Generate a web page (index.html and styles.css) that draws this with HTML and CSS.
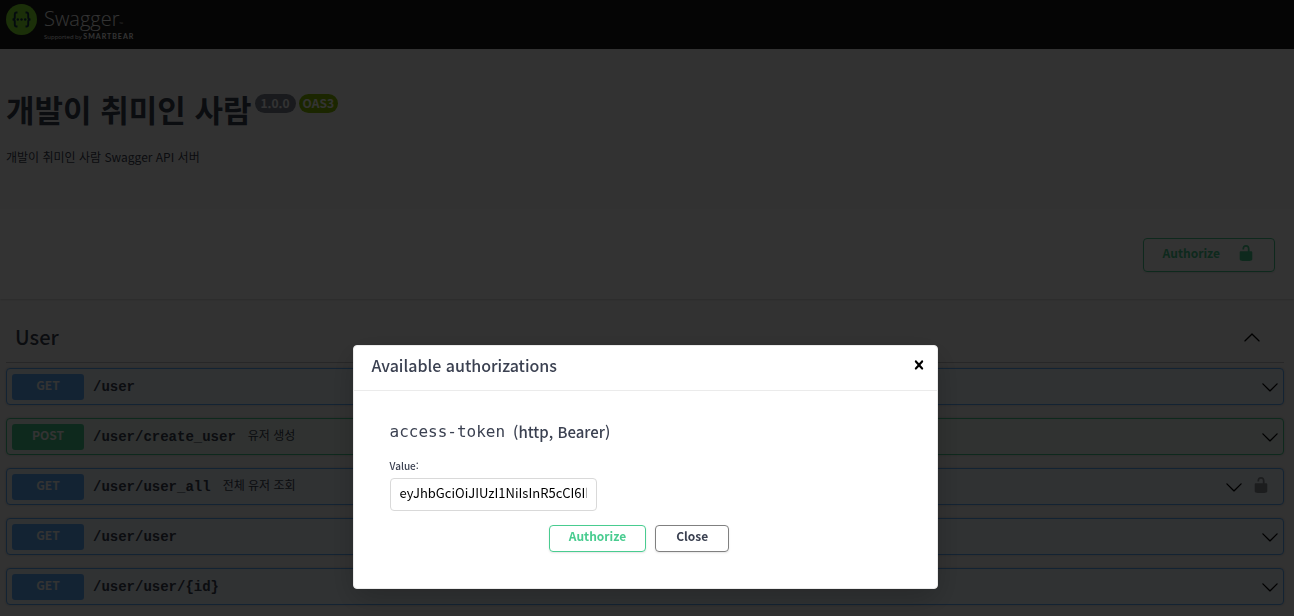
FILE: index.html
```html
<!DOCTYPE html>
<html lang="ko">
<head>
<meta charset="utf-8">
<meta name="viewport" content="width=device-width, initial-scale=1">
<title>Swagger UI</title>
<link rel="stylesheet" href="styles.css">
</head>
<body>
<svg class="sprite" aria-hidden="true">
  <symbol id="arrow-down" viewBox="0 0 20 20"><path d="M17.418 6.109c.272-.268.709-.268.979 0s.271.701 0 .969l-7.908 7.83c-.27.268-.707.268-.979 0l-7.908-7.83c-.27-.268-.27-.701 0-.969.271-.268.709-.268.979 0L10 13.25l7.418-7.141z"/></symbol>
  <symbol id="arrow-up" viewBox="0 0 20 20"><path d="M17.418 14.908c.272.281.709.281.979 0s.271-.712 0-.969L10.489 6.109c-.27-.268-.707-.268-.979 0l-7.908 7.83c-.27.268-.27.701 0 .969.271.268.709.268.979 0L10 7.767l7.418 7.141z"/></symbol>
  <symbol id="unlocked" viewBox="0 0 20 20"><path d="M15.8 8H14V5.6C14 2.703 12.665 1 10 1 7.334 1 6 2.703 6 5.6V6h2v-.801C8 3.754 8.797 3 10 3c1.203 0 2 .754 2 2.199V8H4c-.553 0-1 .646-1 1.199V17c0 .549.428 1.139.951 1.307l1.197.387C5.672 18.861 6.55 19 7.1 19h5.8c.549 0 1.428-.139 1.951-.307l1.196-.387c.524-.167.953-.757.953-1.306V9.199C17 8.646 16.352 8 15.8 8z"/></symbol>
</svg>

<header class="topbar">
  <a class="brand" href="#">
    <svg class="brand-mark" viewBox="0 0 31 31" aria-hidden="true">
      <circle cx="15.500" cy="15.500" r="15.500" fill="#85ea2d"/>
      <g fill="none" stroke="#173647" stroke-width="1.900">
        <path d="M11.500 8.500H10.500Q8.800 8.500 8.800 10.500V13.300Q8.800 15.500 6.500 15.500Q8.800 15.500 8.800 17.700V20.500Q8.800 22.500 10.500 22.500H11.500"/>
        <path d="M19.500 8.500H20.500Q22.200 8.500 22.200 10.500V13.300Q22.200 15.500 24.500 15.500Q22.200 15.500 22.200 17.700V20.500Q22.200 22.500 20.500 22.500H19.500"/>
      </g>
      <g fill="#173647"><circle cx="11.800" cy="15.500" r="1.200"/><circle cx="15.500" cy="15.500" r="1.200"/><circle cx="19.200" cy="15.500" r="1.200"/></g>
    </svg>
    <span class="brand-text">
      <span class="brand-name">Swagger<small>™</small></span>
      <span class="brand-sub">Supported by <b>SMARTBEAR</b></span>
    </span>
  </a>
</header>

<main>
  <section class="info">
    <h1 class="title">개발이 취미인 사람 <span class="badge">1.0.0</span><span class="badge badge-oas">OAS3</span></h1>
    <p class="description">개발이 취미인 사람 Swagger API 서버</p>
  </section>

  <section class="schemes">
    <button class="btn btn-authorize btn-lock" type="button"><span>Authorize</span><svg><use href="#unlocked"/></svg></button>
  </section>

  <section class="operations">
    <h2 class="tag"><span>User</span><button class="icon-btn" type="button" aria-label="Collapse User"><svg><use href="#arrow-up"/></svg></button></h2>
    <div class="op get"><span class="method">GET</span><a class="path" href="#">/user</a><button class="icon-btn toggle" type="button" aria-label="Expand"><svg><use href="#arrow-down"/></svg></button></div>
    <div class="op post"><span class="method">POST</span><a class="path" href="#">/user/create_user</a><span class="summary">유저 생성</span><button class="icon-btn toggle" type="button" aria-label="Expand"><svg><use href="#arrow-down"/></svg></button></div>
    <div class="op get"><span class="method">GET</span><a class="path" href="#">/user/user_all</a><span class="summary">전체 유저 조회</span><button class="icon-btn toggle" type="button" aria-label="Expand"><svg><use href="#arrow-down"/></svg></button><button class="icon-btn lock" type="button" aria-label="Authorization"><svg><use href="#unlocked"/></svg></button></div>
    <div class="op get"><span class="method">GET</span><a class="path" href="#">/user/user</a><button class="icon-btn toggle" type="button" aria-label="Expand"><svg><use href="#arrow-down"/></svg></button></div>
    <div class="op get"><span class="method">GET</span><a class="path" href="#">/user/user/{id}</a><button class="icon-btn toggle" type="button" aria-label="Expand"><svg><use href="#arrow-down"/></svg></button></div>
  </section>
</main>

<div class="backdrop">
  <section class="modal" role="dialog" aria-modal="true" aria-labelledby="modal-title">
    <header class="modal-header">
      <h3 id="modal-title">Available authorizations</h3>
      <button class="icon-btn close" type="button" aria-label="Close dialog"><svg viewBox="0 0 20 20"><path d="M14.348 14.849c-.469.469-1.229.469-1.697 0L10 11.819l-2.651 3.029c-.469.469-1.229.469-1.697 0-.469-.469-.469-1.229 0-1.697l2.758-3.15-2.759-3.152c-.469-.469-.469-1.228 0-1.697s1.228-.469 1.697 0L10 8.183l2.651-3.031c.469-.469 1.228-.469 1.697 0s.469 1.229 0 1.697l-2.758 3.152 2.758 3.15c.469.469.469 1.229 0 1.698z"/></svg></button>
    </header>
    <form class="auth">
      <h4><code>access-token</code><span>(http, Bearer)</span></h4>
      <label for="token">Value:</label>
      <input id="token" type="text" value="eyJhbGciOiJIUzI1NiIsInR5cCI6IkpXVCJ9">
      <div class="actions">
        <button class="btn btn-authorize" type="button">Authorize</button>
        <button class="btn" type="button">Close</button>
      </div>
    </form>
  </section>
</div>
</body>
</html>
```

FILE: styles.css
```css
* { box-sizing: border-box; }

body {
  margin: 0;
  min-height: 100vh;
  background: #fafafa;
  color: #3b4151;
  font-family: "Noto Sans CJK KR", sans-serif;
  font-size: 12px;
}

h1, h2, h3, h4, p { margin: 0; }
a { color: inherit; text-decoration: none; }
button { font-family: inherit; cursor: pointer; }
.sprite { position: absolute; width: 0; height: 0; }

.topbar { height: 49px; padding: 4px 6px; background: #1b1b1b; }
.brand { display: inline-flex; gap: 7px; color: #fff; }
.brand-mark { width: 31px; height: 31px; }
.brand-text { display: flex; flex-direction: column; padding-top: 2px; }
.brand-name { height: 26px; font: 300 20px/26px "Open Sans", sans-serif; }
.brand-name small { font-size: 5px; line-height: 1; }
.brand-sub { font: 400 6px/8px "Open Sans", sans-serif; white-space: nowrap; }
.brand-sub b { font: 700 7px/8px Lato, sans-serif; letter-spacing: 1px; }

.info { padding: 36px 6px 44px; }
.title { display: flex; align-items: flex-start; gap: 3px; font-size: 31px; line-height: 48px; }
.badge {
  margin-top: 9px;
  padding: 0 6px 2px;
  border-radius: 10px;
  background: #7d8492;
  color: #fff;
  font-size: 12px;
  line-height: 17px;
}
.badge-oas { padding: 0 4px 2px; background: #89bf04; }
.description { margin-top: 16px; line-height: 16px; }

.schemes {
  display: flex;
  justify-content: flex-end;
  padding: 29px 19px 27px;
  background: #fff;
  box-shadow: 0 1px 2px rgba(0, 0, 0, .15);
}

.btn {
  padding: 1px 20px 6px;
  border: 1px solid #808080;
  border-radius: 4px;
  background: transparent;
  box-shadow: 0 1px 2px rgba(0, 0, 0, .1);
  color: #3b4151;
  font-size: 12px;
  font-weight: 700;
  line-height: 18px;
}
.btn-authorize { padding: 1px 19px 6px; border-color: #49cc90; color: #49cc90; }
.btn-lock { display: flex; align-items: center; gap: 17px; height: 34px; padding: 0 19px 4px; }
.btn-lock svg { width: 18px; height: 18px; fill: #49cc90; }

.operations { padding: 18px 10px 6px 6px; }
.tag {
  display: flex;
  align-items: center;
  justify-content: space-between;
  height: 46px;
  margin-bottom: 5px;
  padding: 0 23px 6px 9px;
  border-bottom: 1px solid rgba(59, 65, 81, .3);
  font-size: 20px;
  font-weight: 500;
}

.icon-btn { display: flex; padding: 0; border: 0; background: none; }
.icon-btn svg { width: 18px; height: 18px; }

.op {
  display: flex;
  align-items: center;
  height: 37px;
  margin-bottom: 13px;
  padding: 0 4px 0 5px;
  border: 1px solid #61affe;
  border-radius: 4px;
  background: #eff7ff;
  box-shadow: 0 0 3px rgba(0, 0, 0, .19);
}
.op.post { border-color: #49cc90; background: #edfaf4; }
.method {
  width: 72px;
  height: 26px;
  border-radius: 3px;
  background: #61affe;
  color: #fff;
  font-weight: 700;
  line-height: 22px;
  text-align: center;
}
.post .method { background: #49cc90; }
.path { margin-left: 9px; font: 700 14px/18px "Liberation Mono", monospace; }
.summary { margin-left: 12px; padding-bottom: 3px; font-size: 12px; line-height: 18px; }
.toggle { margin-left: auto; }
.lock { margin: 0 9px 3px; opacity: .4; }

.backdrop {
  position: fixed;
  inset: 0;
  display: flex;
  align-items: flex-start;
  justify-content: center;
  padding: 345px 4px 0 0;
  background: rgba(0, 0, 0, .8);
}
.modal {
  width: 585px;
  max-width: 100%;
  border: 1px solid #ebebeb;
  border-radius: 4px;
  background: #fff;
  box-shadow: 0 10px 30px rgba(0, 0, 0, .2);
}
.modal-header {
  display: flex;
  align-items: center;
  justify-content: space-between;
  height: 45px;
  padding: 0 9px 6px 18px;
  border-bottom: 1px solid #ebebeb;
}
.modal-header h3 { font-size: 16px; font-weight: 500; }
.auth { padding: 30px 36px 36px; }
.auth h4 { display: flex; align-items: center; gap: 8px; font-size: 15px; font-weight: 500; line-height: 22px; }
.auth code { font: 400 16px/22px "DejaVu Sans Mono", monospace; }
.auth label { display: block; margin: 15px 0 4px; font-size: 10px; font-weight: 500; line-height: 16px; }
.auth input {
  display: block;
  width: 207px;
  height: 33px;
  padding: 0 9px 5px;
  border: 1px solid #d9d9d9;
  border-radius: 4px;
  background: #fff;
  color: #000;
  font: 400 13px/18px "Noto Sans CJK KR", sans-serif;
}
.actions { display: flex; justify-content: center; gap: 9px; margin: 14px 12px 0 0; }
```
